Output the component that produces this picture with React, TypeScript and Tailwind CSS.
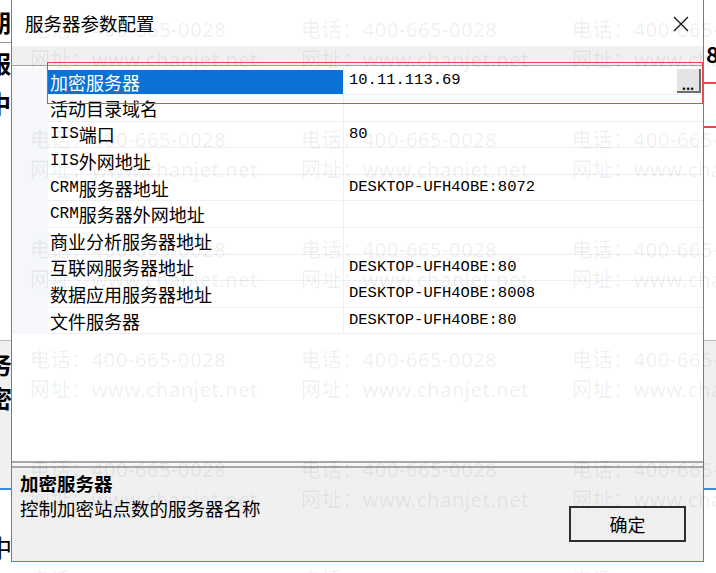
import React from 'react';

const rows: [string, string][] = [
  ['加密服务器', '10.11.113.69'],
  ['活动目录域名', ''],
  ['IIS端口', '80'],
  ['IIS外网地址', ''],
  ['CRM服务器地址', 'DESKTOP-UFH4OBE:8072'],
  ['CRM服务器外网地址', ''],
  ['商业分析服务器地址', ''],
  ['互联网服务器地址', 'DESKTOP-UFH4OBE:80'],
  ['数据应用服务器地址', 'DESKTOP-UFH4OBE:8008'],
  ['文件服务器', 'DESKTOP-UFH4OBE:80'],
];

// ascii bits of a label use the narrower mono face, like SimSun does
const Label = ({ text }: { text: string }) => (
  <>
    {text
      .split(/([A-Za-z]+)/)
      .filter(Boolean)
      .map((part, i) =>
        /[A-Za-z]/.test(part) ? (
          <span key={i} className="font-['Liberation_Mono',monospace] text-[16px]">
            {part}
          </span>
        ) : (
          <span key={i}>{part}</span>
        ),
      )}
  </>
);

const Watermark = () => (
  <div className="pointer-events-none absolute inset-0 overflow-hidden">
    <div className="grid grid-cols-[271px_271px_271px] auto-rows-[110px] pl-[30px] pt-[15px] font-['Noto_Sans','Noto_Sans_CJK_SC',sans-serif] text-[20px] leading-[30px] tracking-[0.6px] text-[rgba(0,0,0,0.07)]">
      {Array.from({ length: 18 }).map((_, i) => (
        <div key={i} className="flex flex-col whitespace-nowrap">
          <span>电话：400-665-0028</span>
          <span>网址：www.chanjet.net</span>
        </div>
      ))}
    </div>
  </div>
);

const Backdrop = () => (
  <div className="flex h-full w-full flex-col font-['Noto_Sans_CJK_SC',sans-serif] font-bold text-black">
    <div className="flex h-[340px] justify-between">
      <div className="flex w-[11px] flex-col overflow-hidden pt-[2px] text-[24px] leading-[40px]">
        <span className="ml-[-13px]">期</span>
        <span className="ml-[-13px] border-t border-[#9a9a9a]">服</span>
        <span className="ml-[-13px]">中</span>
      </div>
      <div className="flex w-[12px] flex-col overflow-hidden pt-[40px]">
        <span className="ml-[2px] text-[22px] font-semibold leading-[26px]">8</span>
        <div className="mt-[16px] h-[2px] bg-[#e5484d]" />
        <div className="mt-[42px] h-[2px] bg-[#e5484d]" />
      </div>
    </div>
    <div className="flex h-[150px] justify-between border-t border-[#b9b9b9] border-b-2 border-b-[#3c8ad8] bg-[#f0f0f0]">
      <div className="flex w-[11px] flex-col overflow-hidden pt-[6px] text-[24px] leading-[34px]">
        <span className="ml-[-12px]">务</span>
        <span className="ml-[-12px]">密</span>
      </div>
      <div className="w-[12px]" />
    </div>
    <div className="flex flex-1 pt-[42px]">
      <div className="w-[11px] overflow-hidden text-[24px] font-normal leading-[30px]">
        <span className="ml-[-12px] block">中</span>
      </div>
    </div>
  </div>
);

const Dialog = () => (
  <div className="absolute left-[11px] top-0 flex h-[562px] w-[693px] flex-col border-x border-b border-[#3c8ad8] bg-white font-['Noto_Sans_CJK_SC',sans-serif] text-black">
    <div className="flex h-[46px] items-center justify-between pl-[13px] pr-[14px]">
      <span className="text-[18.5px] leading-none">服务器参数配置</span>
      <svg width="16" height="16" viewBox="0 0 16 16" className="mt-[1px]">
        <path d="M1 1 L15 15 M15 1 L1 15" stroke="#111" strokeWidth="1.3" fill="none" />
      </svg>
    </div>
    <div className="h-[19px] bg-[#f0f0f0]" />

    <div className="flex h-[398px] flex-col border-t border-b-2 border-t-[#a0a0a0] border-b-[#a8a8a8] bg-white pt-[2.4px]">
      {rows.map(([name, value], i) => (
        <div key={name} className="flex h-[26.6px] text-[18px]">
          <div className="w-[36px] bg-[#f5f7fa]" />
          <div className="flex w-[296px] border-b border-r border-[#eceff3]">
            <div
              className={`flex flex-1 items-center pl-[2px] leading-none ${
                i === 0 ? 'mt-[1.5px] bg-[#0a72d4] text-white' : ''
              }`}
            >
              <Label text={name} />
            </div>
          </div>
          <div className="flex flex-1 items-center border-b border-[#eceff3] pl-[5px] pr-[2px]">
            <span className="flex-1 font-['Liberation_Mono','Noto_Sans_CJK_SC',monospace] text-[15.5px] leading-none">
              {value}
            </span>
            {i === 0 && (
              <div className="flex h-[24px] w-[24px] items-end justify-center border-b-2 border-r-2 border-[#6b6b6b] bg-[#e4e4e4] pb-[1px] text-[13px] font-bold leading-[10px]">
                ...
              </div>
            )}
          </div>
        </div>
      ))}
      <div className="flex-1" />
    </div>

    <div className="h-[3px] bg-[#f6f6f6]" />

    <div className="flex flex-1 border-t-2 border-[#a8a8a8] bg-[#f0f0f0]">
      <div className="flex flex-1 flex-col pl-[8px] pt-[3px] text-[18.5px] leading-[25px]">
        <span className="font-bold">加密服务器</span>
        <span>控制加密站点数的服务器名称</span>
      </div>
      <button className="mb-[19px] mr-[17px] flex h-[36px] w-[117px] items-center justify-center self-end border-2 border-[#2e2e2e] bg-[#efefef] text-[18px] leading-none">
        确定
      </button>
    </div>
  </div>
);

export default function App() {
  return (
    <div className="relative h-[573px] w-[716px] overflow-hidden bg-white">
      <Backdrop />
      <Dialog />
      {/* red annotation box around the first row */}
      <div className="pointer-events-none absolute left-[47px] top-[62px] h-[42px] w-[656px] border-[1.5px] border-[#e5484d]" />
      <Watermark />
    </div>
  );
}
